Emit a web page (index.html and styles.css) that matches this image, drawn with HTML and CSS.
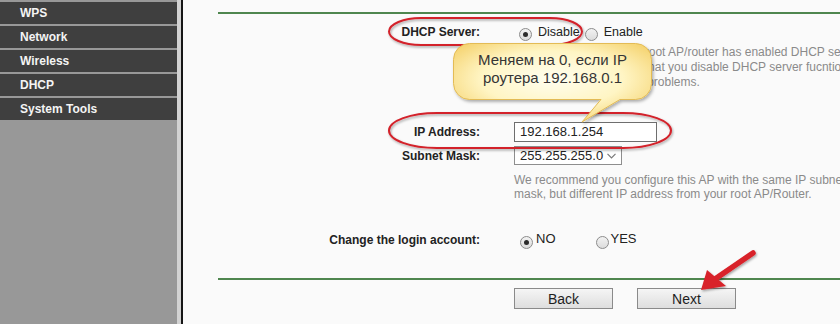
FILE: index.html
```html
<!DOCTYPE html>
<html lang="ru">
<head>
    <meta charset="UTF-8">
    <title>Quick Setup - Network</title>
    <link rel="stylesheet" href="styles.css">
</head>
<body>
    <div class="page">
        <aside class="sidebar">
            <ul class="menu">
                <li>WPS</li>
                <li>Network</li>
                <li>Wireless</li>
                <li>DHCP</li>
                <li>System Tools</li>
            </ul>
        </aside>
        <div class="divider"></div>

        <main class="content">
            <div class="rule rule-top"></div>

            <div class="row row-dhcp">
                <span class="label">DHCP Server:</span>
                <div class="field">
                    <span class="radio checked"></span><span class="opt">Disable</span>
                    <span class="radio"></span><span class="opt">Enable</span>
                </div>
            </div>

            <div class="row row-help1">
                <span></span>
                <p class="help">Notice: If your upstream root AP/router has enabled DHCP server,<br>we strongly recommend that you disable DHCP server fucntion<br>avoid IP address conflict problems.</p>
            </div>

            <div class="row row-ip">
                <span class="label">IP Address:</span>
                <div class="field"><span class="input">192.168.1.254</span></div>
            </div>

            <div class="row row-mask">
                <span class="label">Subnet Mask:</span>
                <div class="field">
                    <span class="select">255.255.255.0
                        <svg class="chevron" width="9" height="6" viewBox="0 0 9 6"><path d="M0.5 0.8 L4.5 4.8 L8.5 0.8" fill="none" stroke="#7a7a7a" stroke-width="1.2"/></svg>
                    </span>
                </div>
            </div>

            <div class="row row-help2">
                <span></span>
                <p class="help">We recommend you configure this AP with the same IP subnet<br>mask, but different IP address from your root AP/Router.</p>
            </div>

            <div class="row row-login">
                <span class="label">Change the login account:</span>
                <div class="field">
                    <span class="radio checked"></span><span class="opt opt-raised">NO</span>
                    <span class="radio radio-yes"></span><span class="opt opt-raised">YES</span>
                </div>
            </div>

            <div class="rule rule-bottom"></div>

            <div class="row row-buttons">
                <span></span>
                <div class="field">
                    <button class="btn">Back</button>
                    <button class="btn">Next</button>
                </div>
            </div>
        </main>
    </div>

    <!-- annotations drawn over the screenshot -->
    <svg class="marks" width="840" height="324" viewBox="0 0 840 324">
        <defs>
            <filter id="shadow" x="-10%" y="-30%" width="120%" height="160%">
                <feDropShadow dx="1" dy="1.5" stdDeviation="1" flood-color="#000" flood-opacity="0.35"/>
            </filter>
        </defs>
        <rect x="389" y="18" width="193" height="27" rx="32" ry="13.5" fill="none" stroke="#d3212a" stroke-width="2" filter="url(#shadow)"/>
        <rect x="389" y="113" width="282" height="35" rx="48" ry="17.5" fill="none" stroke="#d3212a" stroke-width="2" filter="url(#shadow)"/>
        <g filter="url(#shadow)">
            <path d="M753 253 L715 279" stroke="#d8232a" stroke-width="5.5" stroke-linecap="round"/>
            <polygon points="701,290 707,270 726,286" fill="#d8232a"/>
        </g>
    </svg>

    <div class="callout">
        <svg class="callout-shape" width="210" height="90" viewBox="0 0 210 90">
            <defs>
                <radialGradient id="bubbleFill" cx="50%" cy="45%" r="65%">
                    <stop offset="0" stop-color="#fffef0"/>
                    <stop offset="0.55" stop-color="#fff5c4"/>
                    <stop offset="1" stop-color="#f4d068"/>
                </radialGradient>
                <filter id="bubbleShadow" x="-10%" y="-10%" width="130%" height="140%">
                    <feDropShadow dx="1.5" dy="2" stdDeviation="1.5" flood-color="#000" flood-opacity="0.3"/>
                </filter>
            </defs>
            <path d="M16.5 0.5 H182.5 A16 16 0 0 1 198.5 16.5 V40.5 A16 16 0 0 1 182.5 56.5 H167 L129 79 L148 56.5 H16.5 A16 16 0 0 1 0.5 40.5 V16.5 A16 16 0 0 1 16.5 0.5 Z" fill="url(#bubbleFill)" stroke="#e3bb55" stroke-width="1" filter="url(#bubbleShadow)"/>
        </svg>
        <p class="callout-text">Меняем на 0, если IP<br>роутера 192.168.0.1</p>
    </div>
</body>
</html>
```

FILE: styles.css
```css
html, body {
    margin: 0;
    padding: 0;
    width: 840px;
    height: 324px;
    overflow: hidden;
}

body {
    position: relative;
    background: #fafafa;
    font-family: 'Liberation Sans', Arial, sans-serif;
    font-size: 12px;
    color: #222;
}

.page {
    display: flex;
    height: 324px;
}

/* left menu */
.sidebar {
    width: 177px;
    flex-shrink: 0;
    background: #989898;
}

.menu {
    list-style: none;
    margin: 0;
    padding: 2px 0 0 0;
    display: flex;
    flex-direction: column;
    gap: 2px;
}

.menu li {
    height: 22px;
    line-height: 22px;
    padding-left: 20px;
    background: #3f3f3f;
    color: #f4f4f4;
    font-weight: bold;
    font-size: 12px;
}

.divider {
    width: 4px;
    flex-shrink: 0;
    background: #d2d2d2;
    border-right: 2px solid #161616;
}

/* form area */
.content {
    flex: 1;
    padding-left: 35px;
    display: flex;
    flex-direction: column;
}

.rule {
    height: 2px;
    background: #4f864f;
}

.rule-top {
    margin-top: 12px;
}

.row {
    display: grid;
    grid-template-columns: 262px 1fr;
    column-gap: 34px;
    align-items: center;
}

.label {
    text-align: right;
    font-weight: bold;
}

.field {
    display: flex;
    align-items: center;
    white-space: nowrap;
}

.row-dhcp {
    margin-top: 8px;
    height: 20px;
}

.radio {
    width: 11px;
    height: 11px;
    border: 1px solid #8c8c8c;
    border-radius: 50%;
    background: linear-gradient(#f2f2f2, #dcdcdc);
    position: relative;
    margin: 4px 6px 0 5px;
}

.radio.checked::after {
    content: "";
    position: absolute;
    left: 3px;
    top: 3px;
    width: 5px;
    height: 5px;
    border-radius: 50%;
    background: #2b2b2b;
}

.opt-raised {
    margin-top: -3px;
    font-size: 13px;
}

.row-dhcp .opt {
    font-size: 12.5px;
}

.help {
    margin: 0;
    color: #8a8a8a;
    white-space: nowrap;
}

.row-help1 .help {
    margin-top: 3px;
    line-height: 15px;
}

.row-ip {
    margin-top: 32px;
    height: 20px;
}

.input {
    box-sizing: border-box;
    width: 143px;
    height: 20px;
    border: 1px solid #6e6e6e;
    background: #fff;
    padding-left: 5px;
    font-size: 13px;
    line-height: 18px;
    color: #222;
}

.row-mask {
    margin-top: 4px;
    height: 19px;
}

.select {
    box-sizing: border-box;
    height: 19px;
    width: 108px;
    border: 1px solid #8e8e8e;
    background: #fff;
    padding-left: 5px;
    font-size: 13px;
    line-height: 17px;
    display: flex;
    align-items: center;
    gap: 4px;
}

.chevron {
    margin-top: 1px;
}

.row-help2 .help {
    margin-top: 8px;
    line-height: 14px;
}

.row-login {
    margin-top: 29px;
    height: 20px;
}

.row-login .radio {
    margin-left: 6px;
    margin-right: 3px;
}

.row-login .radio-yes {
    margin-left: 40px;
    margin-right: 2px;
}

.rule-bottom {
    margin-top: 28px;
}

.row-buttons {
    margin-top: 8px;
}

.row-buttons .field {
    gap: 24px;
}

.btn {
    width: 99px;
    height: 21px;
    padding: 0;
    border: 1px solid #8a8a8a;
    border-radius: 0;
    background: linear-gradient(#f5f5f5, #dedede);
    font-family: 'Liberation Sans', Arial, sans-serif;
    font-size: 14px;
    color: #1e1e1e;
}

/* overlays */
.marks {
    position: absolute;
    left: 0;
    top: 0;
    pointer-events: none;
}

.callout {
    position: absolute;
    left: 453px;
    top: 43px;
    width: 199px;
    height: 57px;
}

.callout-shape {
    position: absolute;
    left: 0;
    top: 0;
    overflow: visible;
}

.callout-text {
    position: relative;
    margin: 0;
    padding-top: 8px;
    text-align: center;
    font-size: 15px;
    line-height: 18px;
    color: #353535;
}
```
